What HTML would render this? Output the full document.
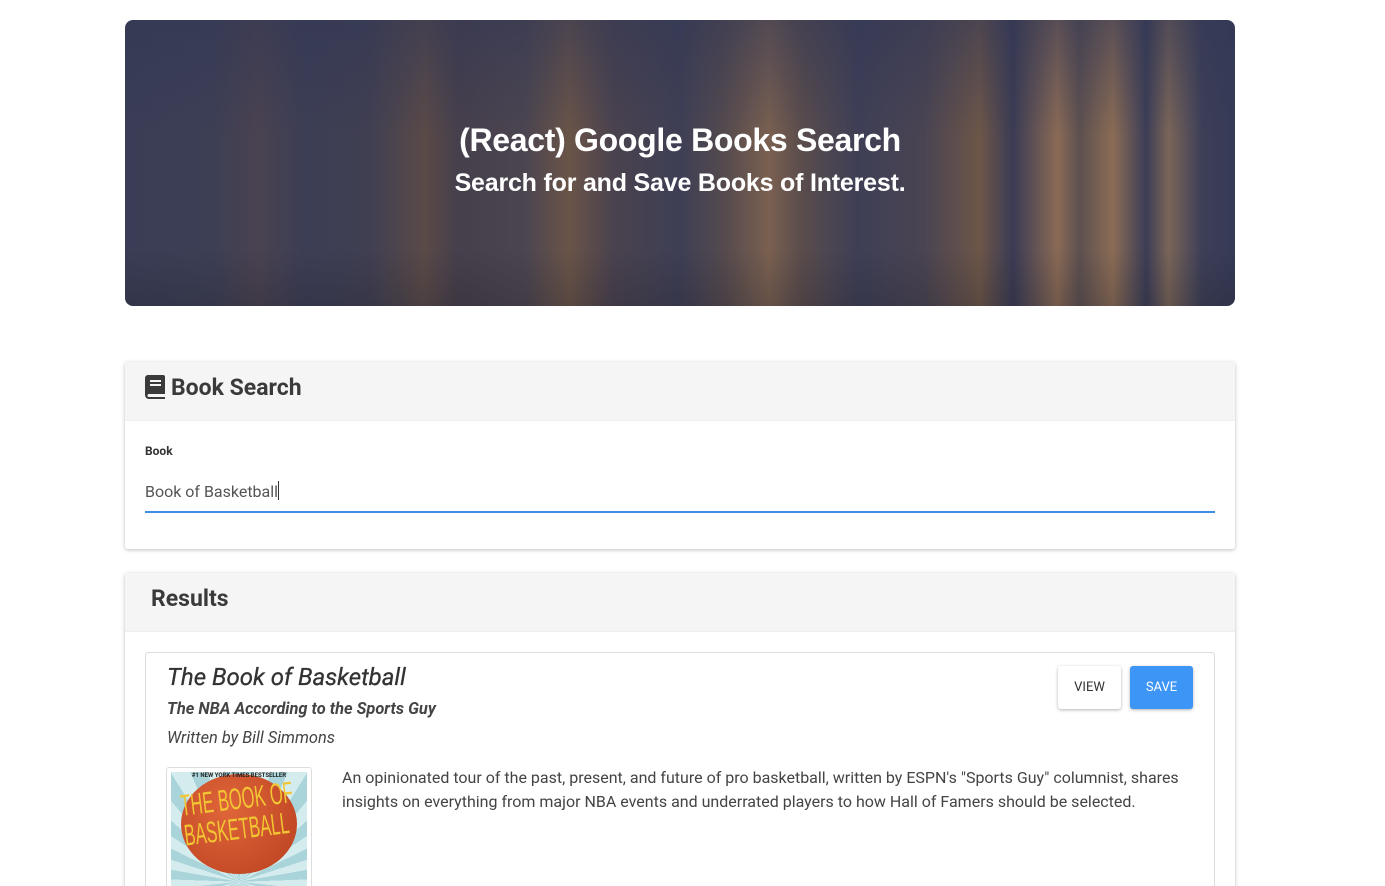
<!DOCTYPE html>
<html style="height:886px;overflow:hidden"><head><meta charset="utf-8"><style>
body{margin:0;background:#fff;font-family:Roboto,"Liberation Sans",sans-serif;width:1385px;height:886px;overflow:hidden;position:relative;color:#333}
.hero{position:absolute;left:125px;top:20px;width:1110px;height:286px;border-radius:8px;overflow:hidden;
background:
linear-gradient(180deg,rgba(50,55,85,0.55) 0%,rgba(50,55,85,0) 40%,rgba(0,0,0,0) 80%,rgba(20,20,30,.2) 100%),
linear-gradient(90deg,#3a3d55 0%,#3d3f55 8%,#4a4250 12%,#3c3e55 16%,#403f52 22%,#5a4a48 27%,#463f4c 30%,#4b4550 36%,#6a5448 40%,#4a424e 44%,#3e3f55 50%,#554a4e 54%,#7a6050 58%,#5a4c4c 61%,#3e3f56 66%,#4a4452 72%,#6d5648 77%,#3a3b54 80%,#8a6a55 84%,#5d5050 86%,#8b6c55 89%,#3b3d56 92%,#7a6558 94%,#3d3f58 97%,#363a55 100%);}
.hero h1{position:absolute;left:0;right:0;top:102px;margin:0;text-align:center;color:#fff;font-family:"Liberation Sans",sans-serif;font-size:32px;font-weight:bold;letter-spacing:-0.3px}
.hero p{position:absolute;left:0;right:0;top:149px;margin:0;text-align:center;color:#fff;font-family:"Liberation Sans",sans-serif;font-size:25px;font-weight:bold;letter-spacing:-0.2px}
.card{position:absolute;left:125px;width:1110px;background:#fff;border-radius:3px;box-shadow:0 1px 4px rgba(0,0,0,.25)}
.head{background:#f5f5f5;height:59px;border-bottom:1px solid #eee;box-sizing:border-box}
.head span{position:absolute;font-size:23px;font-weight:bold;color:#3a3a3a}
.btn{position:absolute;top:13px;height:43px;border-radius:3px;font-size:13px;line-height:43px;text-align:center;box-shadow:0 1px 3px rgba(0,0,0,.3)}
</style></head><body>
<div class="hero"><h1>(React) Google Books Search</h1><p>Search for and Save Books of Interest.</p></div>
<div class="card" style="top:362px;height:187px">
<div class="head"><svg style="position:absolute;left:20px;top:13px" width="20" height="24" viewBox="0 0 20 24"><path d="M3 0h15a2 2 0 0 1 2 2v17H4a1.5 1.5 0 0 0 0 3h16v2H4a4 4 0 0 1-4-4V3a3 3 0 0 1 3-3z" fill="#3a3a3a"/><rect x="5" y="5" width="11" height="2" fill="#f5f5f5"/><rect x="5" y="9" width="11" height="2" fill="#f5f5f5"/></svg><span style="left:46px;top:12px">Book Search</span></div>
<div style="position:absolute;left:20px;top:82px;font-size:12px;font-weight:bold">Book</div>
<div style="position:absolute;left:20px;top:119px;font-size:16px;color:#555">Book of Basketball<span style="display:inline-block;width:1px;height:19px;background:#333;vertical-align:-3px"></span></div>
<div style="position:absolute;left:20px;top:149px;width:1070px;height:2px;background:#3d8fe6"></div>
</div>
<div class="card" style="top:573px;height:330px">
<div class="head"><span style="left:26px;top:12px">Results</span></div>
<div style="position:absolute;left:20px;top:79px;width:1068px;height:260px;border:1px solid #ddd;border-radius:3px">
<div style="position:absolute;left:21px;top:10px;font-size:24px;font-style:italic;color:#333;-webkit-text-stroke:0.3px #333">The Book of Basketball</div>
<div style="position:absolute;left:21px;top:47px;font-size:16.4px;font-style:italic;font-weight:bold;color:#444">The NBA According to the Sports Guy</div>
<div style="position:absolute;left:21px;top:76px;font-size:16.4px;font-style:italic;color:#444">Written by Bill Simmons</div>
<div class="btn" style="left:912px;width:63px;background:#fff;color:#333">VIEW</div>
<div class="btn" style="left:984px;width:63px;background:#3d95f5;color:#fff">SAVE</div>
<div style="position:absolute;left:20px;top:114px;width:144px;height:130px;border:1px solid #ddd;border-radius:3px;background:#fff">
<div style="position:absolute;left:4px;top:4px;width:136px;height:122px;background:repeating-conic-gradient(from 0deg at 50% 90%,#a8d4da 0 8deg,#d5ecee 8deg 16deg);overflow:hidden">
<div style="position:absolute;left:10px;top:2px;width:116px;height:100px;border-radius:50%;background:radial-gradient(circle at 40% 35%,#e0653a,#b8401e)"></div>
<div style="position:absolute;left:0;right:0;top:0;text-align:center;font-size:6px;font-weight:bold;color:#222">#1 NEW YORK TIMES BESTSELLER</div>
<div style="position:absolute;left:8px;top:20px;color:#f2c632;font-family:'Liberation Sans',sans-serif;font-size:30px;line-height:30px;transform:rotate(-7deg) scaleX(0.55);transform-origin:left top;white-space:nowrap">THE BOOK OF<br>BASKETBALL</div>
</div></div>
<div style="position:absolute;left:196px;top:113px;width:860px;font-size:16px;line-height:24px;color:#444">An opinionated tour of the past, present, and future of pro basketball, written by ESPN's "Sports Guy" columnist, shares insights on everything from major NBA events and underrated players to how Hall of Famers should be selected.</div>
</div></div>
</body></html>
